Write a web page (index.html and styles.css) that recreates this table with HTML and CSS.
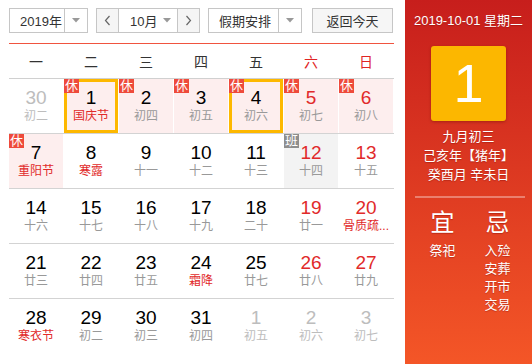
FILE: index.html
```html
<!DOCTYPE html>
<html lang="zh">
<head>
<meta charset="utf-8">
<link rel="stylesheet" href="styles.css">
</head>
<body>
<div class="wrap">
  <div class="main">
    <div class="toolbar">
      <div class="sel sel-year">
        <span class="sel-text">2019年</span>
        <span class="sel-arrow"><svg width="8" height="5" viewBox="0 0 8 5"><path d="M0 0H8L4 4.5Z" fill="#999"/></svg></span>
      </div>
      <div class="month">
        <span class="nav"><svg width="7" height="11" viewBox="0 0 7 11"><path d="M5.5 1L1.5 5.5L5.5 10" fill="none" stroke="#666" stroke-width="1.2"/></svg></span>
        <span class="mid"><span>10月</span><svg width="8" height="5" viewBox="0 0 8 5"><path d="M0 0H8L4 4.5Z" fill="#999"/></svg></span>
        <span class="nav"><svg width="7" height="11" viewBox="0 0 7 11"><path d="M1.5 1L5.5 5.5L1.5 10" fill="none" stroke="#666" stroke-width="1.2"/></svg></span>
      </div>
      <div class="sel sel-holiday">
        <span class="sel-text">假期安排</span>
        <span class="sel-arrow"><svg width="8" height="5" viewBox="0 0 8 5"><path d="M0 0H8L4 4.5Z" fill="#999"/></svg></span>
      </div>
      <div class="btn">返回今天</div>
    </div>
    <div class="redline"></div>
    <div class="weekdays">
      <span>一</span><span>二</span><span>三</span><span>四</span><span>五</span><span class="we">六</span><span class="we">日</span>
    </div>
    <div class="grid">
      <div class="row">
        <div class="cell other"><span class="num">30</span><span class="lunar">初二</span></div>
        <div class="cell rest sel-day"><span class="badge">休</span><span class="num">1</span><span class="lunar fest">国庆节</span></div>
        <div class="cell rest"><span class="badge">休</span><span class="num">2</span><span class="lunar">初四</span></div>
        <div class="cell rest"><span class="badge">休</span><span class="num">3</span><span class="lunar">初五</span></div>
        <div class="cell rest sel-day"><span class="badge">休</span><span class="num">4</span><span class="lunar">初六</span></div>
        <div class="cell rest wkend"><span class="badge">休</span><span class="num">5</span><span class="lunar">初七</span></div>
        <div class="cell rest wkend"><span class="badge">休</span><span class="num">6</span><span class="lunar">初八</span></div>
      </div>
      <div class="row">
        <div class="cell rest"><span class="badge">休</span><span class="num">7</span><span class="lunar fest">重阳节</span></div>
        <div class="cell"><span class="num">8</span><span class="lunar fest">寒露</span></div>
        <div class="cell"><span class="num">9</span><span class="lunar">十一</span></div>
        <div class="cell"><span class="num">10</span><span class="lunar">十二</span></div>
        <div class="cell"><span class="num">11</span><span class="lunar">十三</span></div>
        <div class="cell work wkend"><span class="badge gray">班</span><span class="num">12</span><span class="lunar">十四</span></div>
        <div class="cell wkend"><span class="num">13</span><span class="lunar">十五</span></div>
      </div>
      <div class="row">
        <div class="cell"><span class="num">14</span><span class="lunar">十六</span></div>
        <div class="cell"><span class="num">15</span><span class="lunar">十七</span></div>
        <div class="cell"><span class="num">16</span><span class="lunar">十八</span></div>
        <div class="cell"><span class="num">17</span><span class="lunar">十九</span></div>
        <div class="cell"><span class="num">18</span><span class="lunar">二十</span></div>
        <div class="cell wkend"><span class="num">19</span><span class="lunar">廿一</span></div>
        <div class="cell wkend"><span class="num">20</span><span class="lunar fest">骨质疏...</span></div>
      </div>
      <div class="row">
        <div class="cell"><span class="num">21</span><span class="lunar">廿三</span></div>
        <div class="cell"><span class="num">22</span><span class="lunar">廿四</span></div>
        <div class="cell"><span class="num">23</span><span class="lunar">廿五</span></div>
        <div class="cell"><span class="num">24</span><span class="lunar fest">霜降</span></div>
        <div class="cell"><span class="num">25</span><span class="lunar">廿七</span></div>
        <div class="cell wkend"><span class="num">26</span><span class="lunar">廿八</span></div>
        <div class="cell wkend"><span class="num">27</span><span class="lunar">廿九</span></div>
      </div>
      <div class="row">
        <div class="cell"><span class="num">28</span><span class="lunar fest">寒衣节</span></div>
        <div class="cell"><span class="num">29</span><span class="lunar">初二</span></div>
        <div class="cell"><span class="num">30</span><span class="lunar">初三</span></div>
        <div class="cell"><span class="num">31</span><span class="lunar">初四</span></div>
        <div class="cell other"><span class="num">1</span><span class="lunar">初五</span></div>
        <div class="cell other"><span class="num">2</span><span class="lunar">初六</span></div>
        <div class="cell other"><span class="num">3</span><span class="lunar">初七</span></div>
      </div>
    </div>
  </div>
  <div class="side">
    <div class="date">2019-10-01 星期二</div>
    <div class="daybox">1</div>
    <div class="lunar-info">
      <div>九月初三</div>
      <div>己亥年【猪年】</div>
      <div>癸酉月 辛未日</div>
    </div>
    <div class="divider"></div>
    <div class="yiji">
      <div class="col">
        <div class="big">宜</div>
        <div class="item">祭祀</div>
      </div>
      <div class="col">
        <div class="big">忌</div>
        <div class="item">入殓</div>
        <div class="item">安葬</div>
        <div class="item">开市</div>
        <div class="item">交易</div>
      </div>
    </div>
  </div>
</div>
</body>
</html>
```
FILE: styles.css
```css
html, body {
  margin: 0;
  padding: 0;
}
body {
  width: 532px;
  height: 364px;
  overflow: hidden;
  background: #fff;
  font-family: "Liberation Sans", Arial, "Noto Sans CJK SC", sans-serif;
  color: #333;
}
.wrap {
  display: flex;
  height: 364px;
}
.main {
  width: 385px;
  margin-left: 9px;
  padding-top: 8px;
}
.toolbar {
  display: flex;
  height: 25px;
  font-size: 13px;
  color: #333;
}
.sel {
  display: flex;
  box-sizing: border-box;
  height: 25px;
  border: 1px solid #c6c6c6;
  background: #fff;
}
.sel-year {
  width: 79px;
}
.sel-holiday {
  width: 94px;
  margin-left: 8px;
}
.sel-text {
  flex: 1;
  display: flex;
  align-items: center;
  padding-left: 10px;
}
.sel-arrow {
  flex: 0 0 23px;
  box-sizing: border-box;
  border-left: 1px solid #c6c6c6;
  display: flex;
  align-items: center;
  justify-content: center;
}
.month {
  display: flex;
  box-sizing: border-box;
  width: 104px;
  height: 25px;
  margin-left: 8px;
  border: 1px solid #c6c6c6;
  background: #f5f5f5;
}
.nav {
  width: 21px;
  display: flex;
  align-items: center;
  justify-content: center;
}
.mid {
  flex: 1;
  display: flex;
  align-items: center;
  gap: 6px;
  padding-left: 11px;
  border-left: 1px solid #c6c6c6;
  border-right: 1px solid #c6c6c6;
  background: #fff;
}
.btn {
  box-sizing: border-box;
  width: 81px;
  height: 25px;
  margin-left: 10px;
  border: 1px solid #c6c6c6;
  background: #f6f6f6;
  display: flex;
  align-items: center;
  justify-content: center;
}
.redline {
  height: 1px;
  margin-top: 10px;
  background: #f0533f;
}
.weekdays {
  display: grid;
  grid-template-columns: repeat(7, 54px);
  column-gap: 1px;
  height: 34px;
  align-items: center;
  border-bottom: 1px solid #d0d0d0;
  font-size: 14px;
  color: #333;
  text-align: center;
}
.weekdays .we {
  color: #e02424;
}
.row {
  display: grid;
  grid-template-columns: repeat(7, 54px);
  column-gap: 1px;
  border-bottom: 1px solid #d3d3d3;
}
.row:last-child {
  border-bottom: none;
}
.cell {
  position: relative;
  height: 54px;
  display: flex;
  flex-direction: column;
  align-items: center;
  justify-content: center;
}
.cell.rest {
  background: #fdeeee;
}
.cell.work {
  background: #f3f3f3;
}
.cell.sel-day {
  box-shadow: inset 0 0 0 3px #fdb800;
}
.num {
  font-size: 19px;
  line-height: 20px;
  color: #000;
}
.lunar {
  font-size: 12px;
  line-height: 16px;
  color: #999;
  white-space: nowrap;
}
.lunar.fest {
  color: #e12a2a;
}
.wkend .num {
  color: #e12a2a;
}
.other .num,
.other .lunar {
  color: #bdbdbd;
}
.badge {
  position: absolute;
  top: 0;
  left: 0;
  width: 15px;
  height: 14px;
  background: #ee4a3b;
  color: #fff;
  font-size: 13px;
  line-height: 14px;
  text-align: center;
}
.badge.gray {
  background: #8e8e8e;
}
.side {
  width: 127px;
  margin-left: auto;
  background: linear-gradient(#c71e1c, #f45627);
  color: #fff;
  text-align: center;
  text-shadow: 0 1px 1px rgba(110, 0, 0, 0.35);
}
.date {
  padding-top: 13px;
  font-size: 13px;
  line-height: 16px;
}
.daybox {
  width: 75px;
  height: 75px;
  margin: 17px auto 0;
  background: #fcb700;
  border-radius: 3px;
  box-shadow: 0 1px 3px rgba(80, 0, 0, 0.35);
  font-size: 54px;
  line-height: 75px;
  text-shadow: none;
}
.lunar-info {
  margin-top: 6px;
  font-size: 13px;
  line-height: 19px;
}
.divider {
  height: 2px;
  margin: 12px 7px 0 10px;
  background: rgba(255, 255, 255, 0.35);
}
.yiji {
  display: flex;
  margin: 11px 7px 0 10px;
}
.col {
  flex: 1;
}
.big {
  font-size: 24px;
  line-height: 28px;
  margin-bottom: 5px;
}
.item {
  font-size: 13px;
  line-height: 18px;
}
```
